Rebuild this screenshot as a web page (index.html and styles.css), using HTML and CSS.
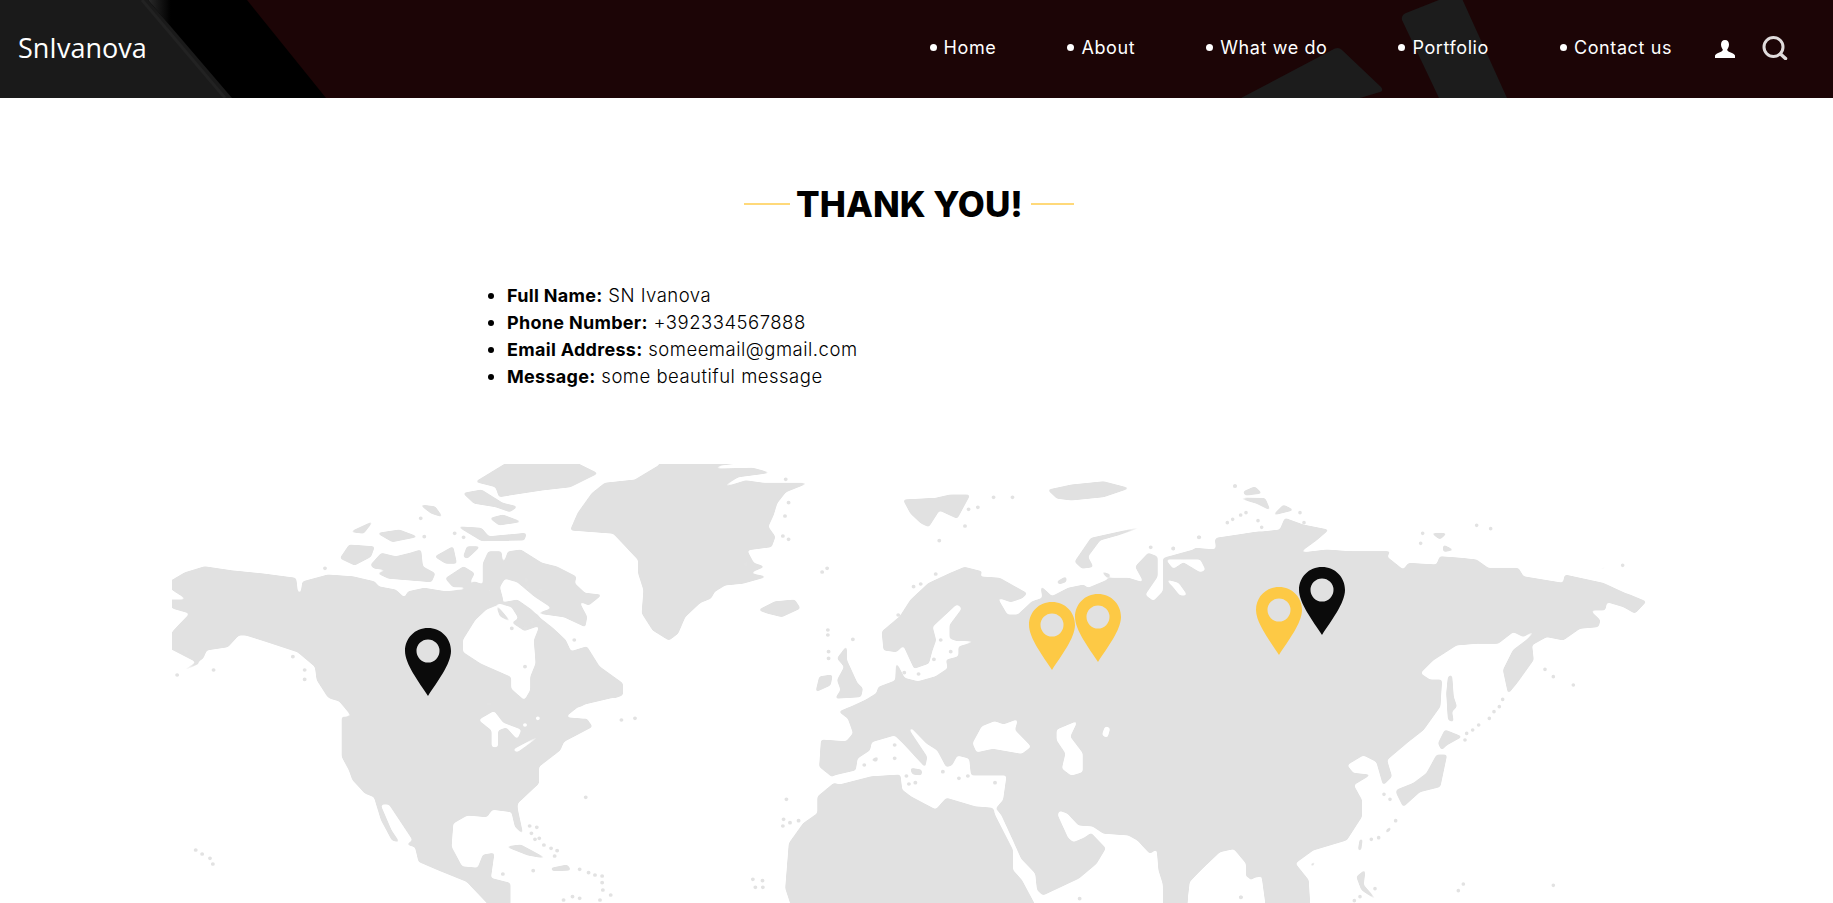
FILE: index.html
```html
<!DOCTYPE html>
<html lang="en">

<head>
  <meta charset="UTF-8">
  <meta name="viewport" content="width=device-width, initial-scale=1.0">
  <title>Thank you</title>
  <link rel="stylesheet" href="styles.css">
</head>

<body>
  <header class="header">
    <svg class="header-bg" viewBox="0 0 1833 98" width="1833" height="98" aria-hidden="true">
      <defs>
        <linearGradient id="band" x1="0" y1="0" x2="1" y2="0">
          <stop offset="0" stop-color="#2a2a2a"></stop>
          <stop offset="0.2" stop-color="#000"></stop>
        </linearGradient>
      </defs>
      <polygon points="0,0 247,0 326,98 0,98" fill="#000"></polygon>
      <polygon points="148,0 178,0 262,98 232,98" fill="url(#band)"></polygon>
      <polygon points="0,0 148,0 232,98 0,98" fill="#1a1a1a"></polygon>
      <path d="M142 0L225 98" stroke="#222" stroke-width="3"></path>
      <path d="M1406 13L1459 -8L1507 98H1439L1402 20Q1401 15 1406 13Z" fill="#1c1c1c"></path>
      <path d="M1332 50Q1338 46 1342 50L1381 87Q1384 91 1380 92L1360 98H1241Z" fill="#1c1c1c"></path>
    </svg>
    <a class="logo" href="#">SnIvanova</a>
    <nav class="nav">
      <a href="#">Home</a>
      <a href="#">About</a>
      <a href="#">What we do</a>
      <a href="#">Portfolio</a>
      <a href="#">Contact us</a>
    </nav>
    <div class="header-icons">
      <svg class="icon-user" viewBox="0 0 20 18" width="20" height="18" aria-hidden="true">
        <path d="M10 0C7.300 0 6 2 6 4.500C6 7 7.200 8.500 7.800 9.500C8 10.500 7 11.300 5.500 12C3 13 .5 13.800 0 15.500V18H20V15.500C19.500 13.800 17 13 14.500 12C13 11.300 12 10.500 12.200 9.500C12.800 8.500 14 7 14 4.500C14 2 12.700 0 10 0Z" fill="#fff"></path>
      </svg>
      <svg class="icon-search" viewBox="0 0 26 24" width="26" height="24" aria-hidden="true">
        <circle cx="11.500" cy="11" r="9.500" fill="none" stroke="#e0dcdc" stroke-width="3"></circle>
        <path d="M18.500 18L23.500 22.500" fill="none" stroke="#e0dcdc" stroke-width="3.500" stroke-linecap="round"></path>
      </svg>
    </div>
  </header>

  <main class="content">
    <h1 class="title">THANK YOU!</h1>
    <ul class="details">
      <li><b>Full Name:</b> SN Ivanova</li>
      <li><b>Phone Number:</b> +392334567888</li>
      <li><b>Email Address:</b> someemail@gmail.com</li>
      <li><b>Message:</b> some beautiful message</li>
    </ul>
  </main>

  <svg class="map" viewBox="0 450 1833 453" width="1833" height="453" aria-hidden="true">
    <defs>
      <clipPath id="map-area"><rect x="172" y="464" width="1500" height="439"></rect></clipPath>
      <!-- rounds off the coastlines: blur the black and white shapes, then cut back to two tones -->
      <filter id="coast" filterUnits="userSpaceOnUse" x="100" y="440" width="1650" height="480" color-interpolation-filters="sRGB">
        <feGaussianBlur stdDeviation="1.500"></feGaussianBlur>
        <feComponentTransfer>
          <feFuncR type="table" tableValues=".886 .886 .886 .886 .886 .95 1 1 1 1 1"></feFuncR>
          <feFuncG type="table" tableValues=".886 .886 .886 .886 .886 .95 1 1 1 1 1"></feFuncG>
          <feFuncB type="table" tableValues=".886 .886 .886 .886 .886 .95 1 1 1 1 1"></feFuncB>
        </feComponentTransfer>
      </filter>
      <path id="pin" fill-rule="evenodd" d="M23 0C10 0 0 10 0 23C0 36 14 54 23 68C32 54 46 36 46 23C46 10 36 0 23 0ZM23 11.500A11.500 11.500 0 1 1 23 34.500A11.500 11.500 0 1 1 23 11.500Z"></path>
    </defs>
    <g clip-path="url(#map-area)">
      <g filter="url(#coast)">
        <rect x="100" y="440" width="1650" height="480" fill="#fff"></rect>
        <!-- america -->
        <g transform="translate(160 450) scale(.35714 .33333)">
          <path class="land" d="M20 400L70 368L125 350L200 362L290 372L380 385L385 428L395 430L400 395L470 375L540 380L600 395L612 410L660 420L685 445L695 425L740 415L800 425L850 420L880 395L905 405L925 430L950 410L960 450L905 490L945 470L985 520L1005 505L985 470L950 460L1000 450L1040 480L1070 510L1100 535L1135 570L1150 605L1195 590L1230 650L1295 700L1295 735L1230 760L1170 770L1135 800L1190 800L1210 830L1130 875L1120 900L1060 950L1060 1000L1000 1060L1000 1075L1015 1150L995 1130L985 1085L930 1078L915 1100L860 1095L820 1120L815 1190L845 1250L890 1255L905 1215L935 1210L925 1285L980 1300L980 1380L935 1380L860 1295L780 1260L725 1235L715 1190L650 1170L620 1110L600 1040L575 1030L540 990L530 960L510 920L510 800L530 805L510 770L470 740L440 690L435 650L385 605L300 575L240 555L220 555L190 590L130 600L120 625L60 665L110 640L20 590L36 545L85 490L36 475L20 450L80 450L36 420Z"></path>
          <path class="water" d="M850 570L885 510L915 480L940 470L950 500L985 520L1020 545L1060 530L1045 570L1050 640L1035 680L1035 720L1020 748L985 715L985 680L900 640L850 605Z"></path>
          <path class="water" d="M620 1065L640 1065L705 1170L680 1188L650 1140Z"></path>
          <path class="water" d="M895 810L935 785L960 820L1010 840L1000 865L970 830L945 840L945 890L930 890L930 840Z"></path>
          <path class="water" d="M990 900L1062 858L1000 905Z"></path>
          <path class="water" d="M1140 800L1190 765L1270 745L1240 775L1190 805Z"></path>
          <path class="water" d="M1185 860L1250 815L1195 870Z"></path>
          <path class="water" d="M465 745L500 755L535 800L500 775Z"></path>
          <path class="land" d="M1150 240L1170 190L1210 130L1245 100L1330 90L1400 45L1400 20L1780 20L1570 45L1540 58L1660 55L1707 68L1620 80L1557 120L1640 92L1690 100L1812 100L1752 125L1727 160L1717 195L1702 230L1722 260L1712 290L1642 300L1662 340L1692 350L1647 370L1697 380L1632 400L1582 405L1552 425L1542 445L1512 458L1470 500L1450 550L1425 570L1380 540L1350 490L1355 420L1340 370L1340 330L1270 250Z"></path>
          <path class="land" d="M505 325L530 285L600 290L590 320L545 345Z"></path>
          <path class="land" d="M590 345L620 310L660 320L700 310L730 300L735 350L770 370L760 395L700 390L640 385L610 370L650 360L600 355Z"></path>
          <path class="land" d="M610 250L670 240L720 260L650 275Z"></path>
          <path class="land" d="M535 245L595 215L570 250Z"></path>
          <path class="land" d="M770 320L820 290L830 340L800 340Z"></path>
          <path class="land" d="M850 320L860 290L895 290L860 325Z"></path>
          <path class="land" d="M905 340L920 305L955 305L960 350L975 305L1010 300L1070 340L1110 350L1165 380L1160 400L1190 430L1235 435L1200 465L1170 450L1195 500L1190 530L1130 500L1060 490L1100 475L1050 440L1000 395L965 385L940 430L905 400Z"></path>
          <path class="land" d="M800 385L850 350L880 370L860 410L820 410Z"></path>
          <path class="land" d="M885 95L1000 20L1130 20L1225 70L1150 110L1070 120L950 140L940 110Z"></path>
          <path class="land" d="M850 130L900 120L960 160L1000 170L980 185L940 170L880 160Z"></path>
          <path class="land" d="M835 230L900 235L920 260L1025 250L1020 270L900 272Z"></path>
          <path class="land" d="M730 165L770 170L790 200L760 190Z"></path>
          <path class="land" d="M925 205L960 195L1010 215L950 225Z"></path>
          <path class="land" d="M970 1190L1010 1185L1080 1225L1030 1215Z"></path>
          <path class="land" d="M1095 1255L1140 1245L1150 1260L1100 1262Z"></path>
        </g>
        <!-- europe and africa -->
        <g transform="translate(700 450) scale(.35714 .33333)">
          <path class="land" d="M370 980L335 950L340 870L410 875L430 850L415 805L390 785L420 772L465 750L495 730L500 712L548 692L550 640L572 685L610 695L660 680L695 655L690 630L725 620L725 590L790 570L720 572L700 565L700 525L735 475L720 460L690 490L650 530L660 570L650 600L640 640L600 655L570 585L550 605L515 600L510 545L560 500L590 450L640 400L700 370L740 352L790 365L780 380L840 385L915 430L900 445L870 455L830 440L860 495L890 495L930 455L960 445L955 410L985 440L1030 415L1075 405L1085 415L1130 395L1150 385L1200 385L1245 400L1220 350L1255 310L1280 320L1280 380L1245 435L1270 455L1310 410L1330 395L1350 425L1365 430L1345 390L1310 380L1300 350L1310 320L1340 330L1380 320L1410 360L1410 335L1385 310L1385 295L1445 300L1445 265L1568 245L1568 1280L1530 1280L1530 1240L1495 1195L1450 1205L1370 1295L1360 1380L1320 1380L1285 1260L1280 1195L1260 1210L1225 1170L1200 1155L1130 1150L1100 1128L1060 1125L1030 1090L1005 1080L1000 1095L1030 1165L1045 1178L1075 1165L1095 1150L1135 1195L1110 1240L1060 1285L960 1335L945 1320L940 1270L900 1225L875 1165L845 1095L830 1075L850 1050L860 975L790 975L760 975L755 925L720 915L705 945L690 950L665 900L635 880L590 830L585 840L635 920L630 950L570 880L545 855L480 875L475 900L440 925L435 960L375 975Z"></path>
          <path class="land" d="M375 1000L390 1005L480 980L560 975L565 1020L590 1040L660 1080L690 1045L770 1070L820 1075L825 1095L875 1200L875 1260L900 1290L945 1380L260 1380L240 1315L250 1180L290 1120L330 1090L330 1040Z"></path>
          <path class="water" d="M765 880L775 905L820 895L900 910L925 890L880 840L888 810L850 825L825 815L790 830Z"></path>
          <path class="water" d="M1000 840L1055 815L1035 860L1070 910L1070 965L1040 975L1015 955L1025 910L1000 870Z"></path>
          <path class="water" d="M1135 830L1147 835L1140 862L1127 855Z"></path>
          <path class="land" d="M325 725L335 680L370 675L365 705Z"></path>
          <path class="land" d="M380 745L395 720L385 690L405 650L385 625L410 590L410 630L440 700L455 715L450 740Z"></path>
          <path class="land" d="M165 480L210 455L265 450L280 475L230 500L190 490Z"></path>
          <path class="land" d="M570 150L660 145L700 135L755 135L720 205L670 180L640 230L620 220L590 190Z"></path>
          <path class="land" d="M975 120L1040 105L1130 95L1200 115L1130 140L1040 150L1000 145Z"></path>
          <path class="land" d="M1240 230L1095 265L1050 335L1070 355L1100 350L1085 320L1120 270L1170 255Z"></path>
          <path class="land" d="M1000 395L1025 380L1025 395L1005 402Z"></path>
          <path class="land" d="M1125 365L1150 375L1140 382Z"></path>
          <path class="land" d="M795 550L815 550L825 572L800 570Z"></path>
          <path class="land" d="M590 955L620 960L620 975L595 972Z"></path>
          <path class="land" d="M480 930L498 920L495 935Z"></path>
        </g>
        <!-- east asia -->
        <g transform="translate(1170 480) scale(.33333)">
          <path class="land" d="M-20 235L70 210L145 210L135 180L240 160L330 150L345 115L400 135L475 150L440 180L385 220L470 210L540 215L600 215L660 215L650 230L700 270L715 250L800 255L810 230L875 235L920 240L955 265L1045 265L1060 290L1180 310L1185 285L1300 310L1365 340L1380 345L1428 365L1395 400L1360 380L1310 365L1305 390L1258 390L1290 420L1285 440L1230 445L1180 480L1130 470L1085 495L1090 540L1040 610L1015 640L1000 570L1030 510L1070 480L1110 440L1060 470L1030 455L985 490L920 490L860 495L790 540L750 580L780 600L815 600L810 680L760 750L715 785L650 840L665 890L640 915L620 845L580 825L530 855L550 880L600 885L550 915L575 960L575 1010L530 1080L430 1110L375 1150L415 1200L420 1290L290 1290L275 1180L240 1200L235 1150L195 1105L150 1115L55 1205L50 1290L-20 1290Z"></path>
          <path class="water" d="M-10 240L30 240L90 240L105 270L90 275L40 245L10 265L-10 240Z"></path>
          <path class="water" d="M-10 300L25 310L50 345L30 345L10 320Z"></path>
          <path class="land" d="M835 590L845 585L850 650L860 680L845 695L850 725L835 720L830 640Z"></path>
          <path class="land" d="M805 790L825 750L875 770L830 795L815 810Z"></path>
          <path class="land" d="M680 930L730 910L770 880L800 825L830 825L810 920L750 935L700 980L680 940Z"></path>
          <path class="land" d="M565 1110L570 1078L577 1078L572 1112Z"></path>
          <path class="land" d="M560 1190L585 1170L580 1215L620 1260L575 1230Z"></path>
          <path class="land" d="M220 35L255 20L275 40L225 45Z"></path>
          <path class="land" d="M210 55L285 55L300 90L260 70Z"></path>
          <path class="land" d="M310 105L340 75L370 90Z"></path>
          <path class="land" d="M785 160L830 160L810 178Z"></path>
          <path class="land" d="M820 195L850 210L820 215Z"></path>
          <path class="land" d="M1290 265L1330 258L1290 268Z"></path>
          <path class="land" d="M645 1055L660 1040L662 1050L650 1058Z"></path>
          <path class="land" d="M420 1155L435 1145L430 1158Z"></path>
        </g>
      </g>
      <g transform="translate(160 450) scale(.35714 .33333)">
        <path class="dots" d="M72 605h0M48 675h0M150 660h0M372 620h0M405 660h0M405 688h0M462 355h0M730 205h0M740 260h0M825 250h0M850 262h0M1025 390h0M1030 412h0M1065 420h0M985 535h0M1022 535h0M1042 515h0M1060 510h0M1160 570h0M1022 650h0M920 762h0M1292 810h0M1330 805h0M100 1200h0M118 1212h0M140 1225h0M148 1242h0M1035 1128h0M1055 1132h0M1040 1150h0M1062 1165h0M1050 1168h0M1075 1185h0M1095 1195h0M1112 1202h0M1105 1218h0M960 1272h0M1045 1262h0M1175 1258h0M1200 1268h0M1218 1275h0M1238 1278h0M1238 1298h0M1240 1320h0M1232 1350h0M1262 1335h0M1155 1340h0M1175 1345h0M1130 1350h0M1192 1042h0"></path>
        <path class="dots-white" d="M1058 805h0M1022 825h0M1000 710h0"></path>
      </g>
      <g transform="translate(700 450) scale(.35714 .33333)">
        <path class="dots" d="M240 88h0M248 158h0M238 198h0M232 258h0M248 268h0M128 342h0M356 355h0M342 366h0M822 142h0M875 142h0M752 178h0M778 172h0M742 228h0M670 272h0M1262 292h0M1325 296h0M1398 262h0M1498 108h0M358 540h0M358 555h0M428 568h0M360 605h0M360 625h0M660 372h0M618 402h0M598 410h0M555 495h0M242 1048h0M234 1108h0M252 1118h0M276 1112h0M232 1128h0M148 1288h0M175 1292h0M155 1312h0M176 1312h0M1063 1346h0M1515 1342h0M674 570h0M702 605h0M655 628h0M572 668h0M612 672h0M545 885h0M545 925h0M460 945h0M578 978h0M585 1002h0M603 998h0M680 965h0M725 985h0M750 978h0M826 998h0"></path>
      </g>
      <g transform="translate(1170 480) scale(.33333)">
        <path class="dots" d="M195 18h0M172 128h0M188 118h0M212 105h0M228 98h0M264 122h0M275 142h0M390 98h0M402 128h0M86 172h0M10 205h0M758 160h0M752 190h0M920 136h0M962 146h0M1358 256h0M1125 568h0M1150 590h0M1210 615h0M998 658h0M988 680h0M972 695h0M958 715h0M926 735h0M908 750h0M890 760h0M885 780h0M642 943h0M660 958h0M677 1022h0M626 1073h0M604 1078h0M1150 1216h0M880 1212h0M865 1232h0M615 1226h0M570 1250h0M553 1262h0M212 1252h0"></path>
      </g>
    </g>
    <use class="pin-black" href="#pin" x="405" y="628"></use>
    <use class="pin-yellow" href="#pin" x="1029" y="602"></use>
    <use class="pin-yellow" href="#pin" x="1075" y="594"></use>
    <use class="pin-yellow" href="#pin" x="1256" y="587"></use>
    <use class="pin-black" href="#pin" x="1299" y="567"></use>
  </svg>
</body>

</html>
```

FILE: styles.css
```css
body {
  margin: 0;
  font-family: Inter, "Liberation Sans", sans-serif;
  background-color: #fff;
  color: #000;
  overflow: hidden;
}

a {
  color: #fff;
  text-decoration: none;
}

.header {
  position: relative;
  display: flex;
  align-items: center;
  box-sizing: border-box;
  height: 98px;
  padding: 0 45px 3px 18px;
  background-color: #1c0506;
  overflow: hidden;
}

.header-bg {
  position: absolute;
  top: 0;
  left: 0;
}

.logo {
  position: relative;
  margin-right: auto;
  font-family: "Open Sans", sans-serif;
  font-size: 27px;
  line-height: 1;
}

.nav {
  position: relative;
  display: flex;
  gap: 71px;
  margin-right: 43px;
}

.nav a {
  display: flex;
  align-items: center;
  gap: 7px;
  font-size: 18px;
  letter-spacing: .6px;
  line-height: 24px;
}

.nav a::before {
  content: "";
  width: 7px;
  height: 7px;
  border-radius: 50%;
  background-color: #fff;
}

.header-icons {
  position: relative;
  display: flex;
  align-items: center;
  gap: 27px;
}

.icon-user {
  margin-top: 2px;
}

.content {
  width: 836px;
  height: 352px;
  margin-left: 491px;
  box-sizing: border-box;
  padding-top: 80px;
}

.title {
  display: flex;
  align-items: center;
  justify-content: center;
  width: 836px;
  margin: 0 0 52px;
  font-size: 35px;
  font-weight: 800;
  line-height: 52px;
}

.title::before,
.title::after {
  content: "";
  height: 2px;
  background-color: #ffd97a;
}

.title::before {
  width: 46px;
  margin-right: 6px;
}

.title::after {
  width: 43px;
  margin-left: 8px;
}

.details {
  margin: 0;
  padding-left: 16px;
  font-size: 18.5px;
  font-weight: 300;
  letter-spacing: .5px;
  line-height: 27px;
}

.details b {
  font-size: 18px;
  font-weight: 700;
  letter-spacing: .3px;
}

.map {
  display: block;
}

.land {
  fill: #000;
  stroke: #000;
  stroke-width: 3;
  stroke-linejoin: round;
}

.water {
  fill: #fff;
  stroke: #fff;
  stroke-width: 3;
  stroke-linejoin: round;
}

.dots,
.dots-white {
  fill: none;
  stroke-width: 11;
  stroke-linecap: round;
}

.dots {
  stroke: #e2e2e2;
}

.dots-white {
  stroke: #fff;
}

.pin-black {
  fill: #0b0b0b;
}

.pin-yellow {
  fill: #fdc945;
}
```
